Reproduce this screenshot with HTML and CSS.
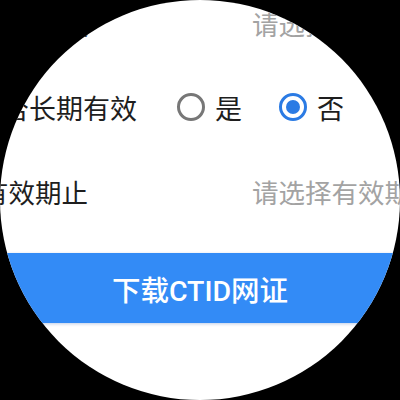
FILE: index.html
```html
<!DOCTYPE html>
<html lang="zh-CN">
<head>
<meta charset="utf-8">
<link rel="stylesheet" href="styles.css">
</head>
<body>
<div class="screen">
  <div class="form">
    <div class="row">
      <div class="label">有效期起</div>
      <div class="placeholder">请选择有效期起</div>
    </div>
    <div class="row">
      <div class="label long">是否长期有效</div>
      <div class="radios">
        <div class="option"><span class="radio"></span><span class="opt-text">是</span></div>
        <div class="option"><span class="radio checked"></span><span class="opt-text">否</span></div>
      </div>
    </div>
    <div class="row">
      <div class="label">有效期止</div>
      <div class="placeholder">请选择有效期止</div>
    </div>
  </div>
  <div class="button">下载CTID网证</div>
</div>
</body>
</html>
```

FILE: styles.css
```css
html, body {
  margin: 0;
  padding: 0;
  background: #000;
}
.screen {
  width: 400px;
  height: 400px;
  border-radius: 50%;
  overflow: hidden;
  background: #fff;
  font-family: Roboto, "Noto Sans CJK SC", sans-serif;
}
.form {
  margin-top: -19px;
  width: 480px;
}
.row {
  display: flex;
  align-items: center;
  height: 84px;
  font-size: 26.5px;
}
.label {
  margin-left: -18px;
  width: 270px;
  flex: none;
  color: #1e1e1e;
  white-space: nowrap;
}
.label.long {
  margin-left: -25px;
  width: 202px;
  font-size: 27px;
}
.placeholder {
  color: #a3a3a3;
  white-space: nowrap;
}
.radios {
  display: flex;
  align-items: center;
  gap: 37px;
  font-size: 27px;
}
.option {
  display: flex;
  align-items: center;
  gap: 10px;
  color: #1e1e1e;
}
.radio {
  width: 28px;
  height: 28px;
  box-sizing: border-box;
  border: 3px solid #777;
  border-radius: 50%;
  display: flex;
  align-items: center;
  justify-content: center;
}
.radio.checked {
  border-color: #2b7be4;
}
.radio.checked::after {
  content: "";
  width: 14px;
  height: 14px;
  border-radius: 50%;
  background: #2b7be4;
}
.button {
  margin-top: 20px;
  height: 70px;
  background: #338bf6;
  color: #fff;
  font-size: 28.5px;
  font-weight: 500;
  display: flex;
  align-items: center;
  justify-content: center;
  box-shadow: 0 1px 3px rgba(0, 60, 160, 0.25);
}
```
